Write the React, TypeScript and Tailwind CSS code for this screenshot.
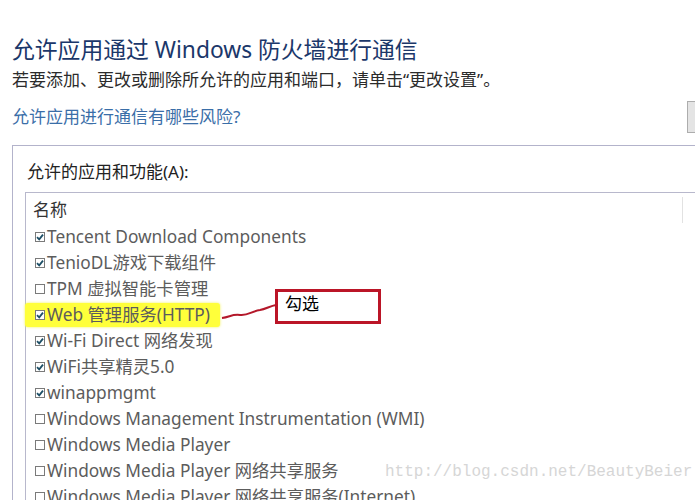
const rows: { label: string; checked: boolean; mark?: boolean }[] = [
  { label: 'Tencent Download Components', checked: true },
  { label: 'TenioDL游戏下载组件', checked: true },
  { label: 'TPM 虚拟智能卡管理', checked: false },
  { label: 'Web 管理服务(HTTP)', checked: true, mark: true },
  { label: 'Wi-Fi Direct 网络发现', checked: true },
  { label: 'WiFi共享精灵5.0', checked: true },
  { label: 'winappmgmt', checked: true },
  { label: 'Windows Management Instrumentation (WMI)', checked: false },
  { label: 'Windows Media Player', checked: false },
  { label: 'Windows Media Player 网络共享服务', checked: false },
  { label: 'Windows Media Player 网络共享服务(Internet)', checked: false },
];

function Box({ checked }: { checked: boolean }) {
  return (
    <svg width="10" height="10" viewBox="0 0 10 10" className="shrink-0">
      <rect x="0.5" y="0.5" width="9" height="9" fill="#fff" stroke="#7a7a7a" />
      {checked && (
        <path d="M2 5.2 L4.2 7.3 L8 2.6" fill="none" stroke="#1d4f66" strokeWidth="1.8" />
      )}
    </svg>
  );
}

export default function App() {
  return (
    <div
      className="relative w-[695px] h-[500px] overflow-hidden bg-white"
      style={{ fontFamily: '"Noto Sans", "Noto Sans CJK SC", sans-serif' }}
    >
      <div className="w-[800px] pl-3 pr-[13px]">
        {/* 标题 */}
        <h1 className="mt-[35px] text-[22.8px] leading-[30px] text-[#1b376a]">
          允许应用通过 Windows 防火墙进行通信
        </h1>
        <p className="mt-[3px] text-[17px] leading-[24px] text-[#2b2b2b]">
          若要添加、更改或删除所允许的应用和端口，请单击“更改设置”。
        </p>
        <div className="mt-[9px] flex items-center">
          <a className="flex-1 text-[17px] leading-[24px] text-[#3a6ea8]">允许应用进行通信有哪些风险?</a>
          <button className="w-[100px] h-[32px] border border-[#adadad] bg-[#e4e4e4]" />
        </div>

        {/* 分组框 */}
        <div className="mt-[12px] border-t border-l border-[#b3b3cb] pl-3 pt-[14px] h-[400px]">
          <div className="pl-[2px] text-[17px] leading-[24px] text-[#222]">允许的应用和功能(A):</div>
          <div className="mt-2 border-t border-l border-[#b8b8cc] h-[400px]">
            <div className="flex h-[31px] pt-1">
              <div className="w-[657px] h-[26px] border-r border-[#e2e2e2] pl-[7px] text-[17px] leading-[26px] text-[#333]">
                名称
              </div>
            </div>
            {rows.map((r) => (
              <div key={r.label} className="flex h-[26px] items-center">
                <div
                  className={
                    r.mark
                      ? 'flex h-[24px] items-center gap-[2px] -ml-px pl-[10px] pr-[10px] bg-[#ffff3a] rounded-[3px] shadow-[0_0_3px_#f2f25a]'
                      : 'flex items-center gap-[2px] pl-[9px]'
                  }
                >
                  <Box checked={r.checked} />
                  <span className="text-[17.3px] leading-[26px] text-[#5c5c5c] whitespace-nowrap">{r.label}</span>
                </div>
              </div>
            ))}
          </div>
        </div>
      </div>

      {/* 标注 */}
      <svg className="absolute left-[218px] top-[298px]" width="60" height="26" viewBox="0 0 60 26">
        <path
          d="M4 20 C12 19 14 16 22 17 C30 18 34 13 42 12 C48 11 52 8 58 7"
          fill="none"
          stroke="#b4182a"
          strokeWidth="2"
        />
      </svg>
      <div className="absolute left-[275px] top-[289px] w-[106px] h-[35px] border-[3px] border-[#bb1527] bg-white pl-[7px] text-[17px] leading-[24px] text-black">
        勾选
      </div>

      <div
        className="absolute left-[385px] top-[461px] text-[16px] leading-[22px] text-[#d6d6d6]"
        style={{ fontFamily: '"Liberation Mono", monospace' }}
      >
        http://blog.csdn.net/BeautyBeier
      </div>
    </div>
  );
}
